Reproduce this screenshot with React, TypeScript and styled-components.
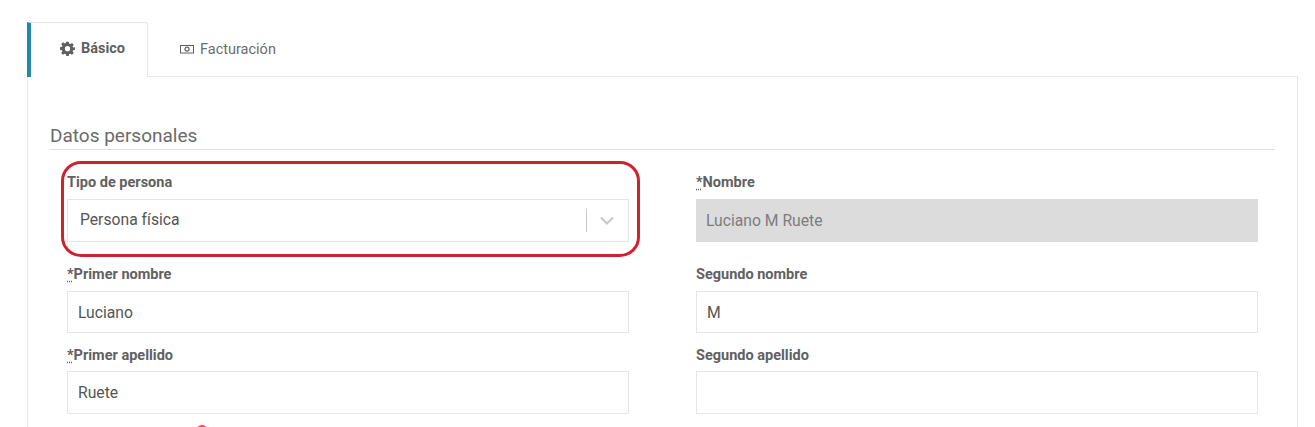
import styled, { createGlobalStyle } from 'styled-components'

const Global = createGlobalStyle`
  html, body { margin: 0; padding: 0; background: #fff; height: 427px; overflow: hidden; }
  * { box-sizing: border-box; }
  body { font-family: Roboto, "Liberation Sans", sans-serif; color: #666; }
`

const Page = styled.div`
  padding: 22px 17px 0 27px;
`
const Tabs = styled.div`
  display: flex;
  height: 55px;
  border-bottom: 1px solid #e7e7e7;
`
const Tab = styled.div<{ $active?: boolean }>`
  display: flex;
  align-items: center;
  gap: 6px;
  height: ${({ $active }) => ($active ? '55px' : '54px')};
  padding: ${({ $active }) => ($active ? '0 20px 3px 29px' : '0 32px')};
  width: ${({ $active }) => ($active ? '121px' : 'auto')};
  font-size: 14.5px;
  font-weight: ${({ $active }) => ($active ? 700 : 400)};
  color: ${({ $active }) => ($active ? '#5f5f5f' : '#6b6b6b')};
  background: #fff;
  border-left: ${({ $active }) => ($active ? '4px solid #2589ae' : 'none')};
  border-top: ${({ $active }) => ($active ? '1px solid #e7e7e7' : 'none')};
  border-right: ${({ $active }) => ($active ? '1px solid #e7e7e7' : 'none')};
  border-top-right-radius: 3px;
`
const Panel = styled.div`
  height: 360px;
  padding: 48px 22px 0 22px;
  border: 1px solid #e7e7e7;
  border-top: none;
`
const Title = styled.h3`
  margin: 0 0 11px;
  height: 25px;
  font-size: 19px;
  line-height: 22px;
  font-weight: 400;
  color: #6a6a6a;
  border-bottom: 1px solid #e0e0e0;
`
const Grid = styled.div`
  position: relative;
  display: grid;
  grid-template-columns: 562px 562px;
  column-gap: 67px;
  padding-left: 17px;
`
const Field = styled.div<{ $height: number }>`
  height: ${({ $height }) => $height}px;
`
const Label = styled.div<{ $top?: number }>`
  height: 38px;
  padding-top: ${({ $top }) => $top ?? 14}px;
  font-size: 14.5px;
  line-height: 16px;
  font-weight: 700;
  color: #616161;
`
const Req = styled.abbr`
  text-decoration: underline dotted;
  text-underline-offset: 2px;
`
const Input = styled.div<{ $disabled?: boolean; $h?: number }>`
  display: flex;
  align-items: center;
  height: ${({ $h }) => $h ?? 43}px;
  padding: 0 ${({ $disabled }) => ($disabled ? 9 : 10)}px;
  font-size: 15.7px;
  color: ${({ $disabled }) => ($disabled ? '#7d7d7d' : '#555')};
  background: ${({ $disabled }) => ($disabled ? '#dcdcdc' : '#fff')};
  border: 1px solid ${({ $disabled }) => ($disabled ? '#dcdcdc' : '#e5e5e5')};
`
const SelectBox = styled(Input)`
  justify-content: space-between;
  padding: 0 14px 0 12px;
`
const SelectValue = styled.span`
  margin-bottom: 2px;
`
const SelectEnd = styled.div`
  display: flex;
  align-items: center;
  height: 23px;
  padding-left: 13px;
  border-left: 1px solid #c8c8c8;
`
const Highlight = styled.div`
  position: absolute;
  left: 11px;
  top: 0;
  width: 579px;
  height: 96px;
  border: 3px solid #d0222e;
  border-radius: 20px;
  pointer-events: none;
`
const Dot = styled.div`
  position: absolute;
  left: 146px;
  top: 264px;
  width: 12px;
  height: 12px;
  border-radius: 50%;
  background: #f0476d;
`

const Gear = () => (
  <svg width="15" height="15" viewBox="0 0 24 24" fill="#5f5f5f">
    <path fillRule="evenodd" d="M10 1h4l.7 3.2 1.7.7 2.8-1.8 2.8 2.8-1.8 2.8.7 1.7L24 10v4l-3.100.7-.7 1.7 1.800 2.800-2.800 2.800-2.800-1.800-1.700.7L14 24h-4l-.7-3.100-1.700-.7-2.800 1.800-2.800-2.800 1.800-2.800-.7-1.700L0 14v-4l3.100-.7.7-1.700L2 4.900 4.800 2.100l2.800 1.800 1.700-.7zM12 8a4.200 4.200 0 1 0 0 8.400A4.200 4.200 0 0 0 12 8z" />
  </svg>
)

const Bill = () => (
  <svg width="14" height="10" viewBox="0 0 14 10" fill="none" stroke="#5f5f5f">
    <rect x="0.5" y="1.500" width="13" height="7.500" strokeWidth="1" />
    <circle cx="7" cy="5.200" r="2" strokeWidth="1.200" />
  </svg>
)

const Chevron = () => (
  <svg width="14" height="9" viewBox="0 0 14 9" fill="none" stroke="#c6c6c6" strokeWidth="2">
    <path d="M1 1.500l6 6 6-6" />
  </svg>
)

const App = () => {
  return (
    <>
      <Global />
      <Page>
        <Tabs>
          <Tab $active><Gear />Básico</Tab>
          <Tab><Bill />Facturación</Tab>
        </Tabs>
        <Panel>
          <Title>Datos personales</Title>
          <Grid>
            <Highlight />
            <Dot />
            <Field $height={92}>
              <Label>Tipo de persona</Label>
              <SelectBox>
                <SelectValue>Persona física</SelectValue>
                <SelectEnd><Chevron /></SelectEnd>
              </SelectBox>
            </Field>
            <Field $height={92}>
              <Label><Req>*</Req>Nombre</Label>
              <Input $disabled>Luciano M Ruete</Input>
            </Field>
            <Field $height={80}>
              <Label><Req>*</Req>Primer nombre</Label>
              <Input $h={42}>Luciano</Input>
            </Field>
            <Field $height={80}>
              <Label>Segundo nombre</Label>
              <Input $h={42}>M</Input>
            </Field>
            <Field $height={80}>
              <Label $top={15}><Req>*</Req>Primer apellido</Label>
              <Input>Ruete</Input>
            </Field>
            <Field $height={80}>
              <Label $top={15}>Segundo apellido</Label>
              <Input />
            </Field>
          </Grid>
        </Panel>
      </Page>
    </>
  )
}

export default App
